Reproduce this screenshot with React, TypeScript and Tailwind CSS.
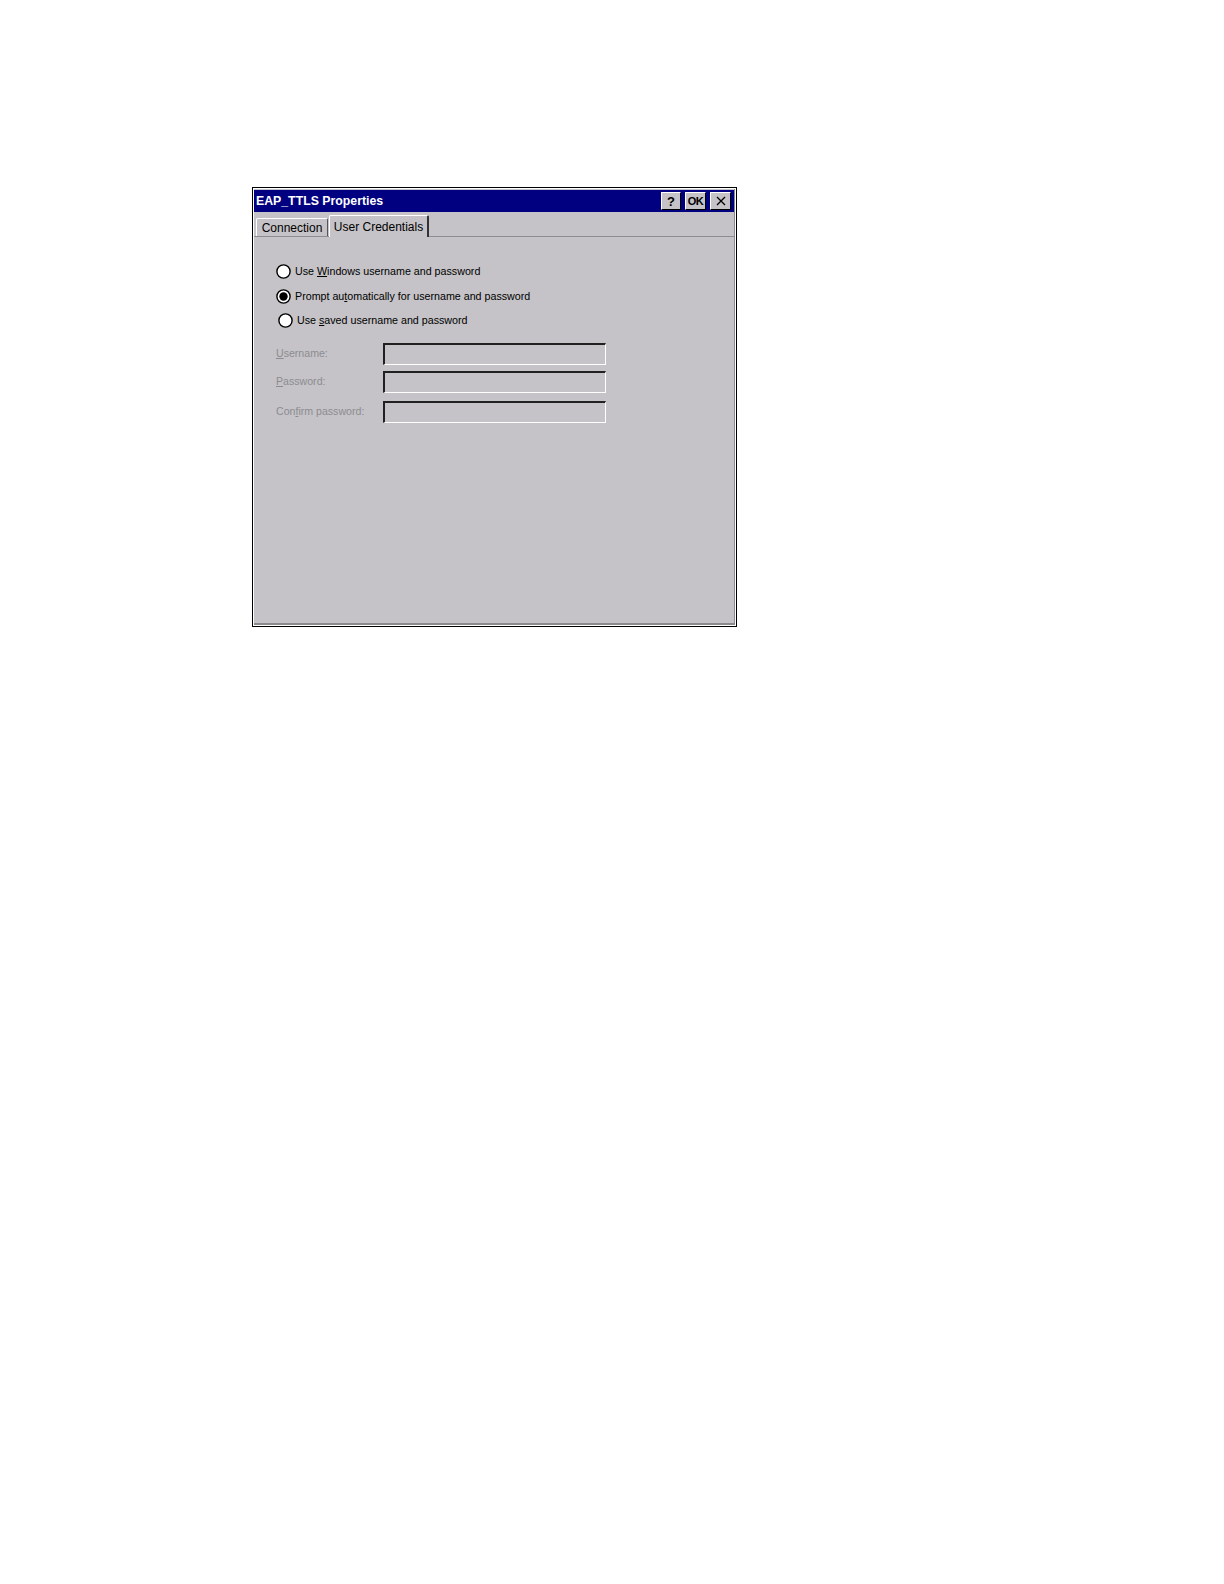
import React from "react";

const font = { fontFamily: '"Liberation Sans", Arial, sans-serif' };

function Radio({ checked }: { checked?: boolean }) {
  return (
    <svg width="15" height="15" viewBox="0 0 15 15" className="shrink-0">
      <circle cx="7.5" cy="7.5" r="6.6" fill="#ffffff" stroke="#000000" strokeWidth="1.4" />
      {checked && <circle cx="7.5" cy="7.5" r="4.2" fill="#000000" />}
    </svg>
  );
}

function Field({ u, rest, pre }: { u: string; rest: string; pre?: string }) {
  return (
    <div className="flex items-center h-[22px]">
      <div className="w-[107px] text-[10.6px] text-[#8c8c90]">
        {pre}
        <span className="underline underline-offset-1">{u}</span>
        {rest}
      </div>
      <div className="w-[223px] h-[22px] border-t-2 border-l-2 border-b border-r border-t-[#202020] border-l-[#202020] border-b-white border-r-white bg-[#c5c3c7]" />
    </div>
  );
}

export default function App() {
  return (
    <div className="w-[1224px] h-[1584px] bg-white" style={font}>
      <div className="pt-[187px] pl-[252px]">
        <div className="w-[485px] h-[440px] border border-black bg-white p-[1px] flex flex-col">
          <div className="flex-1 flex flex-col bg-[#c5c3c7] border-b-2 border-r border-b-[#8a898c] border-r-[#8a898c]">
            <div className="h-[22px] mt-[1px] bg-[#000080] flex items-center pl-[2px] pr-[3px]">
              <span className="text-white font-bold text-[12.3px] leading-none">EAP_TTLS Properties</span>
              <div className="ml-auto flex gap-[4px]">
                <div className="w-[20px] h-[18px] bg-[#c5c3c7] border border-t-white border-l-white border-b-black border-r-black flex items-center justify-center text-[13px] font-bold leading-none text-black">?</div>
                <div className="w-[21px] h-[18px] bg-[#c5c3c7] border border-t-white border-l-white border-b-black border-r-black flex items-center justify-center text-[11px] font-bold leading-none tracking-[-0.6px] text-black">OK</div>
                <div className="w-[21px] h-[18px] bg-[#c5c3c7] border border-t-white border-l-white border-b-black border-r-black flex items-center justify-center">
                  <svg width="10" height="10" viewBox="0 0 10 10">
                    <path d="M1 1 L9 9 M9 1 L1 9" stroke="#000" strokeWidth="1.3" />
                  </svg>
                </div>
              </div>
            </div>
            <div className="flex items-end pl-[2px] mt-[3px] h-[22px] border-b border-b-[#8e8d90]">
              <div className="h-[18px] w-[72px] border-t border-l border-r border-t-white border-l-white border-r-[#555] rounded-t-[2px] flex items-center justify-center text-[12px] text-black">
                Connection
              </div>
              <div className="h-[22px] w-[100px] ml-[1px] -mb-[1px] bg-[#c5c3c7] border-t border-l border-r-2 border-t-white border-l-white border-r-[#333] rounded-t-[2px] flex items-start pt-[2px] justify-center text-[12px] text-black">
                User Credentials
              </div>
            </div>
            <div className="pl-[22px] pt-[27px] flex flex-col">
              <div className="flex items-center gap-[4px] h-[15px]">
                <Radio />
                <span className="text-[10.7px] text-black">
                  Use <span className="underline underline-offset-1">W</span>indows username and password
                </span>
              </div>
              <div className="flex items-center gap-[4px] h-[15px] mt-[10px]">
                <Radio checked />
                <span className="text-[10.7px] text-black">
                  Prompt au<span className="underline underline-offset-1">t</span>omatically for username and password
                </span>
              </div>
              <div className="flex items-center gap-[4px] h-[15px] mt-[9px] pl-[2px]">
                <Radio />
                <span className="text-[10.7px] text-black">
                  Use <span className="underline underline-offset-1">s</span>aved username and password
                </span>
              </div>
              <div className="mt-[15px] flex flex-col gap-[6px]">
                <Field u="U" rest="sername:" />
                <Field u="P" rest="assword:" />
                <div className="mt-[2px]">
                  <Field pre="Con" u="f" rest="irm password:" />
                </div>
              </div>
            </div>
          </div>
        </div>
      </div>
    </div>
  );
}
